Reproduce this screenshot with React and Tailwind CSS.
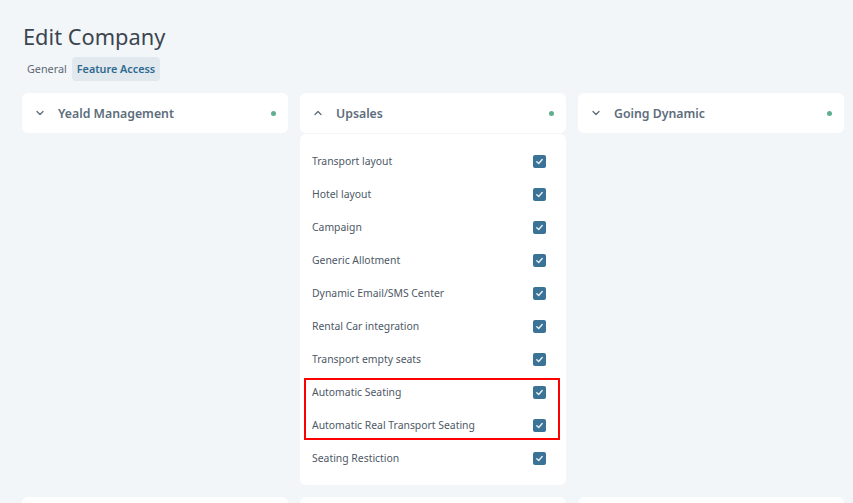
import React from "react";
import { ChevronDown, ChevronUp } from "lucide-react";

const features = [
  "Transport layout",
  "Hotel layout",
  "Campaign",
  "Generic Allotment",
  "Dynamic Email/SMS Center",
  "Rental Car integration",
  "Transport empty seats",
  "Automatic Seating",
  "Automatic Real Transport Seating",
  "Seating Restiction",
];

function Check() {
  return (
    <div className="w-[13px] h-[13px] rounded-[2px] bg-[#3b7396] flex items-center justify-center">
      <svg width="9" height="9" viewBox="0 0 10 10" fill="none">
        <path d="M2 5.3 L4.1 7.2 L8 2.8" stroke="#e8f1f6" strokeWidth="1.6" strokeLinecap="round" strokeLinejoin="round" />
      </svg>
    </div>
  );
}

function Header({ title, open }) {
  const Icon = open ? ChevronUp : ChevronDown;
  return (
    <div className="h-10 bg-white rounded-md flex items-center pl-[12px] pr-[12px]">
      <Icon size={12} strokeWidth={2.5} className="text-[#5f6b76]" />
      <span className="ml-[12px] text-[12.3px] font-semibold text-[#5d6d7c] leading-none mt-[2px]">{title}</span>
      <span className="ml-auto w-[5px] h-[5px] rounded-full bg-[#5fae8e]" />
    </div>
  );
}

function Row({ label }) {
  return (
    <div className="h-[33px] flex items-center justify-between pl-[12px] pr-[20px]">
      <span className="text-[10.4px] text-[#4d5866] leading-none">{label}</span>
      <Check />
    </div>
  );
}

export default function App() {
  const plain = features.slice(0, 7);
  const marked = features.slice(7, 9);
  return (
    <div className="min-h-[503px] bg-[#f3f6f9] pl-[22px] pr-[9px] pt-[20px]" style={{ fontFamily: '"Noto Sans", "Open Sans", sans-serif' }}>
      <h1 className="text-[21.8px] text-[#3b4550] leading-[34px] pl-px">Edit Company</h1>
      <div className="mt-[3px] flex items-center">
        <span className="px-[5px] text-[10.8px] text-[#5d6873] leading-6">General</span>
        <span className="px-[5px] h-6 rounded-[4px] bg-[#e1e8ee] text-[10.8px] font-semibold text-[#2e6a8e] leading-6">Feature Access</span>
      </div>

      <div className="mt-3 grid grid-cols-3 gap-x-3 gap-y-3 items-start">
        <Header title="Yeald Management" />
        <div>
          <Header title="Upsales" open />
          <div className="mt-[1px] bg-white rounded-md pt-[11px] pb-[10px]">
            {plain.map((f) => (
              <Row key={f} label={f} />
            ))}
            <div className="relative">
              {marked.map((f) => (
                <Row key={f} label={f} />
              ))}
              <div className="absolute left-[4px] right-[6px] top-[2px] bottom-[2px] border-[2.5px] border-[#ff0000] pointer-events-none" />
            </div>
            <Row label={features[9]} />
          </div>
        </div>
        <Header title="Going Dynamic" />
        <div className="h-10 bg-white rounded-md" />
        <div className="h-10 bg-white rounded-md" />
        <div className="h-10 bg-white rounded-md" />
      </div>
    </div>
  );
}
